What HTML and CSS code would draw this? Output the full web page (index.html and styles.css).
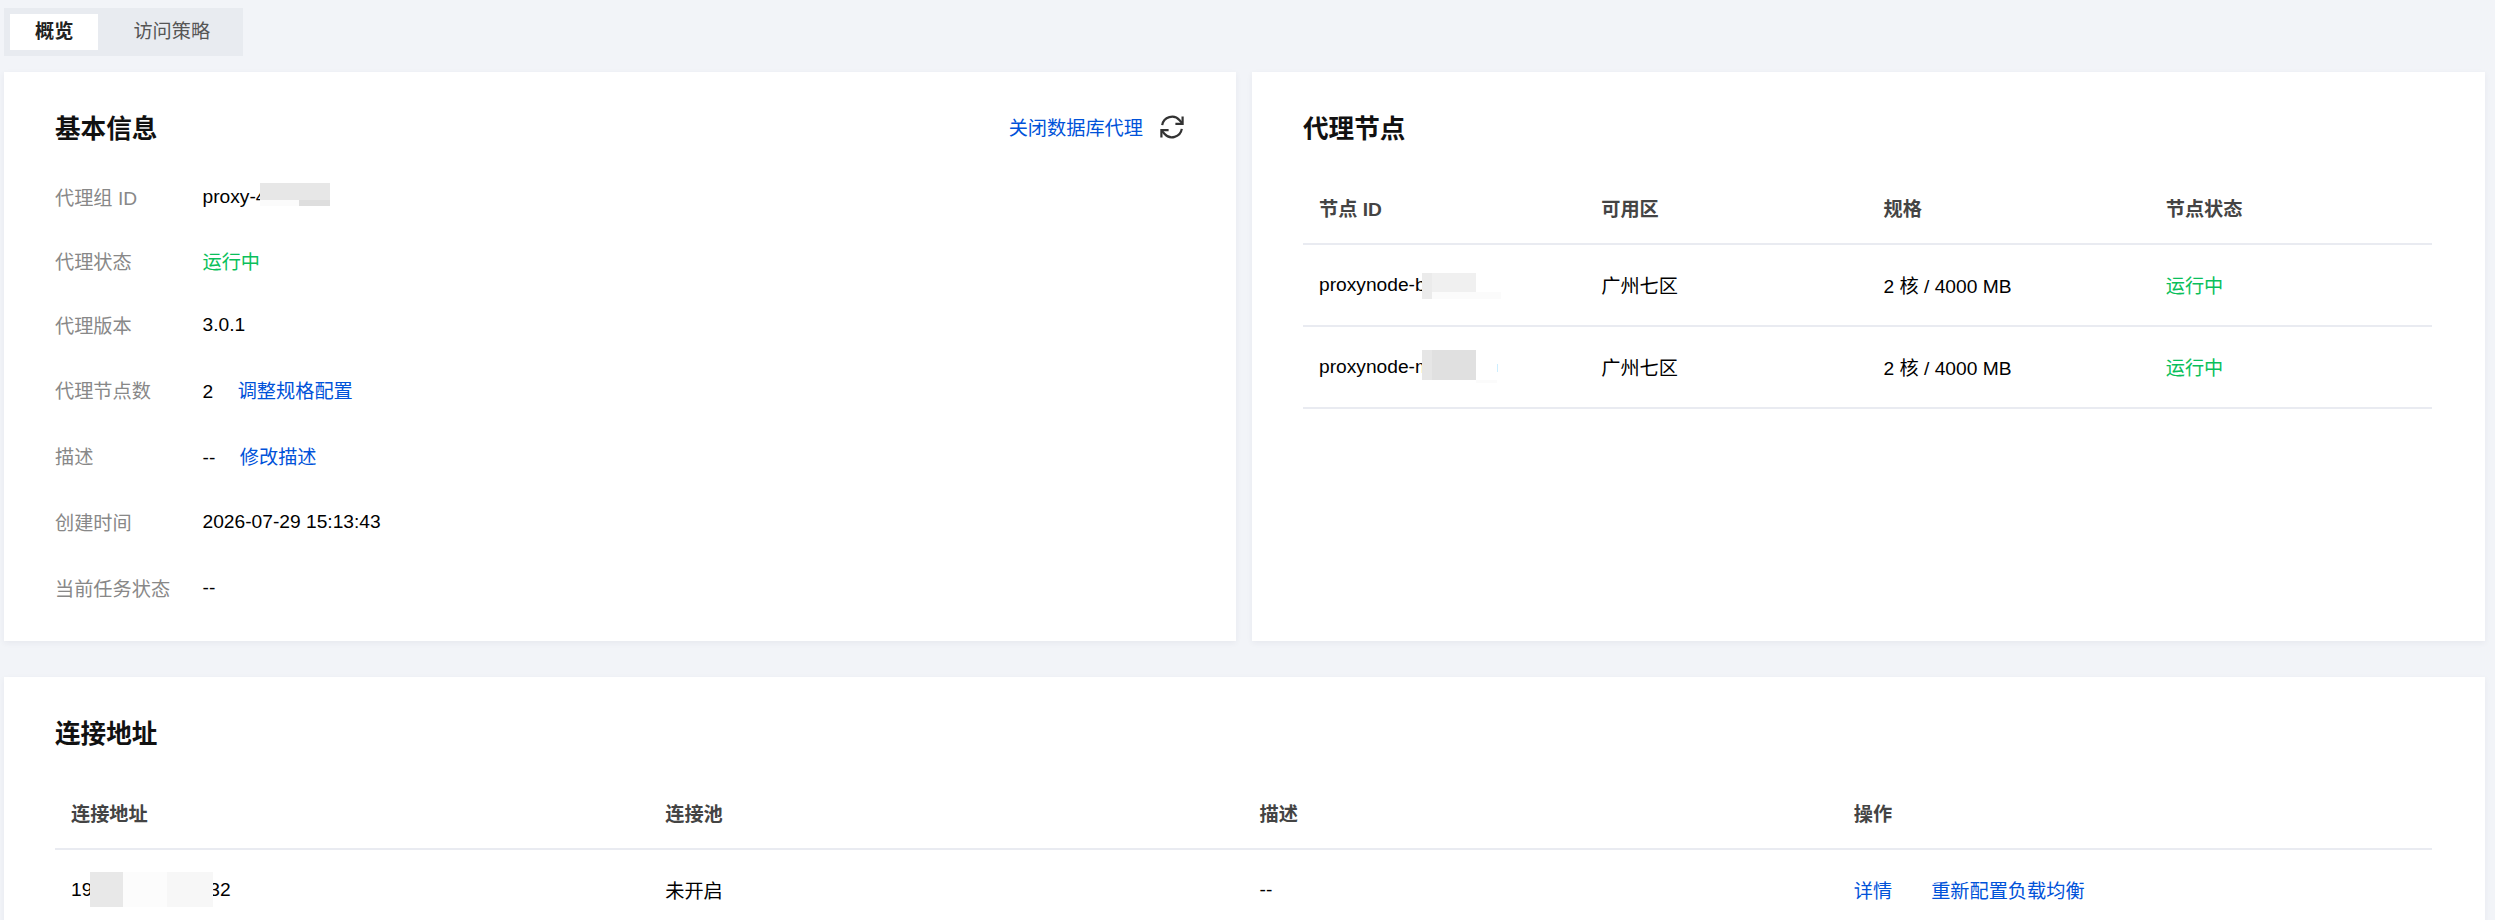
FILE: index.html
```html
<!DOCTYPE html>
<html lang="zh-CN">
<head>
    <meta charset="UTF-8">
    <meta name="viewport" content="width=device-width, initial-scale=1.0">
    <title>数据库代理</title>
    <link rel="stylesheet" href="styles.css">
</head>
<body>
    <div class="page">
        <div class="tabs">
            <a class="tab active">概览</a>
            <a class="tab">访问策略</a>
        </div>

        <div class="top-row">
            <section class="card">
                <div class="card-head">
                    <h2>基本信息</h2>
                    <div class="card-actions">
                        <a class="link">关闭数据库代理</a>
                        <svg class="refresh" viewBox="0 0 24 24" fill="none" stroke="#333" stroke-width="2.2">
                            <path d="M2.2 10.2A10 10 0 0 1 19.6 5.2L22 8"/>
                            <path d="M21.8 13.8A10 10 0 0 1 4.4 18.8L2 16"/>
                            <path d="M22.6 1.4V8.8H15.4"/>
                            <path d="M1.4 22.6V15.2H8.6"/>
                        </svg>
                    </div>
                </div>

                <dl class="info">
                    <div class="info-row">
                        <dt>代理组 ID</dt>
                        <dd><span class="masked">proxy-4<span class="mask m-id-a"></span><span class="mask m-id-b"></span><span class="mask m-id-c"></span></span></dd>
                    </div>
                    <div class="info-row">
                        <dt>代理状态</dt>
                        <dd class="ok">运行中</dd>
                    </div>
                    <div class="info-row">
                        <dt>代理版本</dt>
                        <dd>3.0.1</dd>
                    </div>
                    <div class="info-row with-link">
                        <dt>代理节点数</dt>
                        <dd>2<a class="link after-value">调整规格配置</a></dd>
                    </div>
                    <div class="info-row with-link">
                        <dt>描述</dt>
                        <dd>--<a class="link after-value">修改描述</a></dd>
                    </div>
                    <div class="info-row">
                        <dt>创建时间</dt>
                        <dd>2026-07-29 15:13:43</dd>
                    </div>
                    <div class="info-row">
                        <dt>当前任务状态</dt>
                        <dd>--</dd>
                    </div>
                </dl>
            </section>

            <section class="card">
                <div class="card-head">
                    <h2>代理节点</h2>
                </div>
                <table class="table">
                    <thead>
                        <tr>
                            <th>节点 ID</th>
                            <th>可用区</th>
                            <th>规格</th>
                            <th>节点状态</th>
                        </tr>
                    </thead>
                    <tbody>
                        <tr>
                            <td><span class="masked">proxynode-b<span class="mask m-b-a"></span><span class="mask m-b-b"></span><span class="mask m-b-c"></span></span></td>
                            <td>广州七区</td>
                            <td>2 核 / 4000 MB</td>
                            <td class="ok">运行中</td>
                        </tr>
                        <tr>
                            <td><span class="masked">proxynode-m<span class="mask m-m-a"></span><span class="mask m-m-b"></span><span class="mask m-m-c"></span><span class="mask m-m-d"></span></span></td>
                            <td>广州七区</td>
                            <td>2 核 / 4000 MB</td>
                            <td class="ok">运行中</td>
                        </tr>
                    </tbody>
                </table>
            </section>
        </div>

        <section class="card card-wide">
            <div class="card-head">
                <h2>连接地址</h2>
            </div>
            <table class="table">
                <thead>
                    <tr>
                        <th>连接地址</th>
                        <th>连接池</th>
                        <th>描述</th>
                        <th>操作</th>
                    </tr>
                </thead>
                <tbody>
                    <tr>
                        <td><span class="masked">19<span class="ip-gap"></span>32<span class="mask m-ip-a"></span><span class="mask m-ip-b"></span><span class="mask m-ip-c"></span></span></td>
                        <td>未开启</td>
                        <td>--</td>
                        <td><a class="link">详情</a><a class="link next-op">重新配置负载均衡</a></td>
                    </tr>
                </tbody>
            </table>
        </section>
    </div>
</body>
</html>
```

FILE: styles.css
```css
html, body {
    height: 100%;
    overflow: hidden;
}

body {
    margin: 0;
    background-color: #f2f4f8;
    color: #000;
    font-family: "Liberation Sans", "Noto Sans CJK SC", sans-serif;
    font-size: 19.2px;
}

.page {
    padding: 8px 10px 0 4px;
}

/* Tabs */
.tabs {
    display: inline-flex;
    gap: 10px;
    padding: 6px 8px 6px 6px;
    background: #e8ebf0;
    vertical-align: top;
}

.tab {
    padding: 0 25px;
    line-height: 36px;
    color: #555;
}

.tab.active {
    background: white;
    color: #222;
    font-weight: bold;
}

/* Cards */
.top-row {
    display: grid;
    grid-template-columns: 1232px 1fr;
    gap: 16px;
    margin-top: 16px;
}

.card {
    height: 569px;
    box-sizing: border-box;
    padding: 36px 53px 0 51px;
    background: white;
    box-shadow: 0 2px 6px rgba(54, 58, 80, 0.06);
}

.card-wide {
    height: auto;
    margin-top: 36px;
    padding-bottom: 40px;
}

.card-head {
    display: flex;
    justify-content: space-between;
    align-items: center;
    height: 38px;
}

h2 {
    margin: -2px 0 0;
    font-size: 25.6px;
    font-weight: bold;
    color: #111;
}

.card-actions {
    display: flex;
    align-items: center;
    gap: 17px;
    margin-right: -1px;
}

.refresh {
    width: 24px;
    height: 24px;
}

.link {
    color: #0052d9;
}

.ok {
    color: #0abf5b;
}

/* Basic info list */
.info {
    margin: 19px 0 0;
}

.info-row {
    display: flex;
    align-items: center;
    height: 64px;
}

.info-row.with-link {
    height: 66px;
}

.info-row:nth-child(6) {
    height: 65px;
}

.info-row:last-child {
    height: 67px;
}

dt {
    width: 147.5px;
    color: #888;
}

dd {
    margin: 0;
}

.after-value {
    margin-left: 24.5px;
}

/* Tables */
.table {
    width: 100%;
    margin-top: 26px;
    border-collapse: collapse;
    table-layout: fixed;
}

.table th, .table td {
    padding: 0 16px;
    text-align: left;
    border-bottom: 2px solid #e9ebf1;
}

.table th {
    height: 71px;
    color: #444;
    font-weight: bold;
}

.table td {
    height: 80px;
}

.next-op {
    margin-left: 39px;
}

/* Blurred-out parts of ids and addresses */
.masked {
    position: relative;
    display: inline-block;
}

.mask {
    position: absolute;
}

.ip-gap {
    display: inline-block;
    width: 117px;
}

.m-id-a { left: 57px; top: -3px; width: 70px; height: 17px; background: #e7e7e7; }
.m-id-b { left: 57px; top: 14px; width: 39px; height: 6px; background: #fbfbfb; }
.m-id-c { left: 96px; top: 14px; width: 31px; height: 6px; background: #dedede; }

.m-b-a { left: 103px; top: -1px; width: 10px; height: 26px; background: #ebebeb; }
.m-b-b { left: 113px; top: -1px; width: 44px; height: 19px; background: #f0f0f0; }
.m-b-c { left: 113px; top: 18px; width: 69px; height: 7px; background: #fbfbfb; }

.m-m-a { left: 103px; top: -6px; width: 10px; height: 30px; background: #e6e6e6; }
.m-m-b { left: 113px; top: -6px; width: 44px; height: 30px; background: #e0e0e0; }
.m-m-c { left: 157px; top: 24px; width: 21px; height: 3px; background: #fbfbfb; }
.m-m-d { left: 178px; top: 8px; width: 1px; height: 8px; background: #cdeeff; }

.m-ip-a { left: 19px; top: -7px; width: 33px; height: 35px; background: #e8e8e8; }
.m-ip-b { left: 52px; top: -7px; width: 44px; height: 35px; background: #fcfcfc; }
.m-ip-c { left: 96px; top: -7px; width: 46px; height: 35px; background: #f7f7f7; }
```
